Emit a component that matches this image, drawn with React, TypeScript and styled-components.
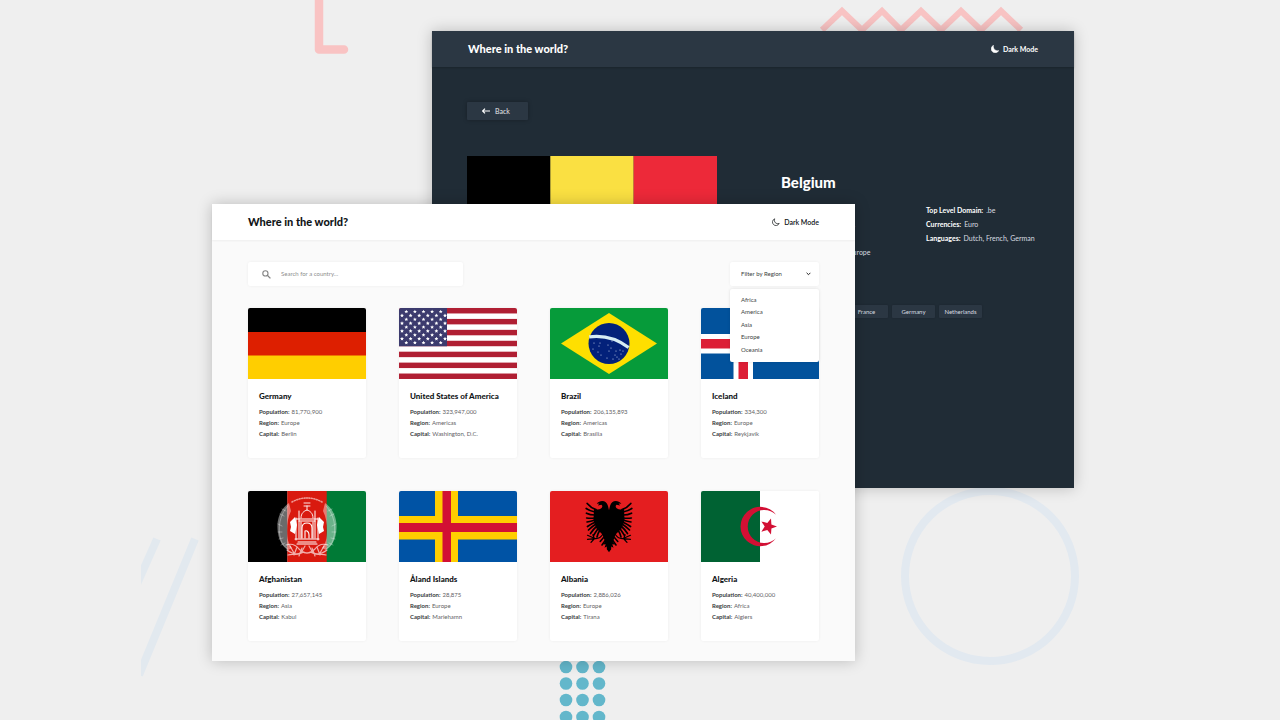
import React from "react";
import styled, { createGlobalStyle, css } from "styled-components";

const GlobalStyle = createGlobalStyle`
  *, *::before, *::after { box-sizing: border-box; }
  body {
    margin: 0;
    background: #efefef;
    font-family: Lato, "Open Sans", sans-serif;
  }
  h1, h2, h3, ul, dl, dd, p { margin: 0; padding: 0; }
  ul { list-style: none; }
  button, input, select { font-family: inherit; border: 0; margin: 0; }
`;

const Stage = styled.div`
  position: relative;
  min-height: 100vh;
  overflow: hidden;
`;

const Ornament = styled.svg`
  position: absolute;
  overflow: visible;
  fill: none;
`;
const Corner = styled(Ornament)` top: 0; left: 314px; `;
const Zigzag = styled(Ornament)` top: 0; right: 252px; `;
const Slashes = styled(Ornament)` top: 534px; left: 141px; overflow: hidden; `;
const Ring = styled(Ornament)` top: 487px; right: 200px; `;
const Dots = styled(Ornament)` top: 658px; left: 559px; `;

const Window = styled.section<{ $dark?: boolean }>`
  position: absolute;
  box-shadow: 0 0 14px rgba(0, 0, 0, 0.22);
  ${({ $dark }) =>
    $dark
      ? css`
          top: 31px;
          left: 432px;
          right: 206px;
          min-height: 457px;
          background: #202c36;
          color: #fff;
        `
      : css`
          top: 204px;
          left: 212px;
          right: 425px;
          background: #fafafa;
          color: #111517;
        `}
`;

const TopBar = styled.header<{ $dark?: boolean }>`
  display: flex;
  align-items: center;
  justify-content: space-between;
  height: 36px;
  padding: 0 36px 1px;
  background: ${({ $dark }) => ($dark ? "#2b3743" : "#fff")};
  box-shadow: 0 1px 2px rgba(0, 0, 0, ${({ $dark }) => ($dark ? 0.2 : 0.05)});
`;

const Brand = styled.h1`
  font-size: 11px;
  line-height: 16px;
  font-weight: 900;
`;

const ModeButton = styled.button<{ $bold?: boolean }>`
  display: flex;
  align-items: center;
  gap: 4px;
  padding: 0;
  background: none;
  color: inherit;
  font-size: 7px;
  line-height: 10px;
  font-weight: ${({ $bold }) => ($bold ? 700 : 600)};
`;

const DarkMain = styled.main`
  padding: 35px;
`;

const BackButton = styled.button`
  display: flex;
  align-items: center;
  justify-content: center;
  gap: 5px;
  width: 61px;
  height: 18px;
  padding: 0 3px 0 0;
  border-radius: 1px;
  background: #2b3743;
  color: #e3e6e9;
  font-size: 7px;
  box-shadow: 0 0 4px rgba(0, 0, 0, 0.3);
`;

const Detail = styled.div`
  display: grid;
  grid-template-columns: 250px 1fr;
  gap: 64px;
  margin-top: 36px;
`;

const BigFlag = styled.svg`
  display: block;
  width: 100%;
  height: 166px;
`;

const DetailInfo = styled.div`
  padding-top: 16px;
`;

const DetailTitle = styled.h2`
  font-size: 15px;
  line-height: 20px;
  font-weight: 900;
`;

const FactColumns = styled.div`
  display: grid;
  grid-template-columns: 145px 1fr;
  margin-top: 11px;
`;

const FactList = styled.dl<{ $large?: boolean }>`
  font-size: ${({ $large }) => ($large ? 7 : 6)}px;
  line-height: ${({ $large }) => ($large ? 14 : 11)}px;
  color: ${({ $large }) => ($large ? "#d9dde1" : "#5f6265")};
  white-space: nowrap;
`;

const Fact = styled.div<{ $large?: boolean }>`
  display: flex;
  gap: ${({ $large }) => ($large ? 3 : 2)}px;
`;

const FactName = styled.dt<{ $large?: boolean }>`
  font-weight: 700;
  color: ${({ $large }) => ($large ? "#fff" : "#3a3d40")};
`;

const Borders = styled.div`
  display: flex;
  align-items: center;
  gap: 4px;
  margin-top: 32px;
  font-size: 7px;
  line-height: 13px;
`;

const BordersTitle = styled.h3`
  width: 60px;
  font-size: inherit;
  white-space: nowrap;
`;

const Chip = styled.a`
  width: 43px;
  border-radius: 1px;
  background: #2b3743;
  color: #d9dde1;
  font-size: 6px;
  text-align: center;
  text-decoration: none;
  box-shadow: 0 0 2px rgba(0, 0, 0, 0.2);
`;

const LightMain = styled.main`
  padding: 22px 36px 20px;
`;

const Controls = styled.div`
  display: flex;
  justify-content: space-between;
  margin-bottom: 22px;
`;

const SearchBox = styled.label`
  display: flex;
  align-items: center;
  gap: 10px;
  width: 215px;
  height: 24px;
  padding: 0 14px;
  border-radius: 2px;
  background: #fff;
  box-shadow: 0 0 3px rgba(0, 0, 0, 0.06);
`;

const SearchInput = styled.input`
  flex: 1;
  min-width: 0;
  padding: 0;
  background: none;
  outline: none;
  font-size: 6px;
  line-height: 12px;
  color: #111517;
  &::placeholder { color: #8e8e8e; opacity: 1; }
`;

const Filter = styled.div`
  position: relative;
  width: 89px;
  height: 24px;
  border-radius: 2px;
  background: #fff;
  box-shadow: 0 0 3px rgba(0, 0, 0, 0.06);
`;

const FilterSelect = styled.select`
  appearance: none;
  display: block;
  width: 100%;
  height: 24px;
  padding: 0 11px 2px;
  background: none;
  outline: none;
  font-size: 6px;
  color: #3c3f42;
`;

const FilterArrow = styled.svg`
  position: absolute;
  top: 10px;
  right: 8px;
  pointer-events: none;
`;

const FilterMenu = styled.ul`
  position: absolute;
  top: 27px;
  left: 0;
  width: 100%;
  padding: 4px 0 6px;
  border-radius: 2px;
  background: #fff;
  box-shadow: 0 0 3px rgba(0, 0, 0, 0.12);
`;

const MenuItem = styled.button`
  display: block;
  width: 100%;
  height: 13px;
  padding: 0 11px;
  background: none;
  color: #3c3f42;
  font-size: 6px;
  line-height: 13px;
  text-align: left;
  li:nth-child(even) > & { height: 12px; line-height: 12px; }
`;

const CardGrid = styled.div`
  display: grid;
  grid-template-columns: repeat(4, 1fr);
  gap: 33px;
`;

const Card = styled.article`
  overflow: hidden;
  border-radius: 2px;
  background: #fff;
  box-shadow: 0 0 3px rgba(0, 0, 0, 0.06);
`;

const CardFlag = styled.svg`
  display: block;
  width: 100%;
  height: 71px;
`;

const CardBody = styled.div`
  padding: 11px 11px 19px;
`;

const CardTitle = styled.h2`
  margin-bottom: 4px;
  font-size: 8px;
  line-height: 12px;
  font-weight: 900;
  white-space: nowrap;
`;

const GermanyFlag = () => (
  <>
    <path fill="#000" d="M0 0h118v24H0z" />
    <path fill="#dd1f00" d="M0 24h118v24H0z" />
    <path fill="#ffce00" d="M0 47.400h118V71H0z" />
  </>
);

const UsaFlag = () => (
  <>
    <path fill="#fff" d="M0 0h118v71H0z" />
    {[0, 1, 2, 3, 4, 5, 6].map((i) => (
      <rect key={i} y={i * 10.92} width="118" height="5.46" fill="#b01f33" />
    ))}
    <path fill="#3c3b6e" d="M0 0h48v38.200H0z" />
    {Array.from({ length: 9 }, (_, r) =>
      Array.from({ length: r % 2 ? 6 : 5 }, (_, c) => (
        <path
          key={`${r}-${c}`}
          transform={`translate(${(r % 2 ? 3 : 7.300) + c * 8.600} ${3.600 + r * 3.880})`}
          fill="#fff"
          d="M0-1.900L.6-.7 1.900-.6.9.400 1.200 1.700 0 1-1.200 1.700-.9.400-1.900-.6-.6-.7z"
        />
      ))
    )}
  </>
);

const BrazilFlag = () => (
  <>
    <path fill="#069b3a" d="M0 0h118v71H0z" />
    <path fill="#fedf00" d="M11 35.500L59 5l48 30.500L59 66z" />
    <circle cx="59" cy="35.500" r="20.500" fill="#03217a" />
    <path d="M39.200 28.800Q61 26 78.600 39.500" fill="none" stroke="#d6ecf4" strokeWidth="3.200" />
    <g fill="#c8d2ea">
      {[[44, 35], [49, 38], [43, 41], [48, 44], [51, 47], [50, 35], [58, 37], [61, 40], [59, 43], [66, 43], [70, 42], [71, 46], [67, 49], [69, 51], [73, 43], [65, 47], [57, 50], [62, 33], [63, 51]].map(
        ([x, y]) => <circle key={`${x}-${y}`} cx={x} cy={y} r=".6" />
      )}
    </g>
  </>
);

const IcelandFlag = () => (
  <>
    <path fill="#02529c" d="M0 0h118v71H0z" />
    <path fill="#fff" d="M32.500 0h19.500v26H118v19.500H52V71H32.500V45.500H0V26h32.500z" />
    <path fill="#dc1e35" d="M37.500 0h9.500v31H118v9.500H47V71h-9.500V40.500H0V31h37.500z" />
  </>
);

const AfghanFlag = () => (
  <>
    <path fill="#000" d="M0 0h39.500v71H0z" />
    <path fill="#d91a0f" d="M39.300 0H79v71H39.300z" />
    <path fill="#007a36" d="M78.700 0H118v71H78.700z" />
    <g fill="none" stroke="#fff" strokeLinecap="round">
      {[1, -1].map((s) => (
        <g key={s} transform={s === 1 ? undefined : "translate(118 0) scale(-1 1)"}>
          <path d="M41 12C31 19 28 31 30 42c1 8 5 14 10 17l4-2c-4-5-5-10-5-17 0-8 1-14 4-20z" fill="#fff" fillOpacity=".42" stroke="none" />
          <path d="M40 15c-8 8-11 22-7 34 1 4 4 7 7 9M38 20l-4-2M36 25l-4-2M34 35l-4-2M34 41l-4 0M35 47l-4 1M37 52l-4 2" strokeWidth=".7" strokeOpacity=".45" />
          <path d="M38 54c6-2 10 0 13 4 3 3 5 4 8 4M39 59c5 4 11 5 17 2M40 64c5-2 9 1 12-2M42 55l4 7M49 56l-3 8M54 57l-3 8M57 55l-4 7" strokeWidth="1.200" strokeOpacity=".65" />
          <path d="M42 31l5-5 2 8-2 9-5-3 1-4z" fill="#fff" stroke="none" />
          <path d="M48 27v22M51 20v27M53 31v16" strokeWidth="1" />
          <path d="M44 11q7-4 15-4" strokeWidth="1.600" strokeOpacity=".55" strokeDasharray="1 1.600" />
        </g>
      ))}
      <path d="M48 28h22M47 48h24M50 51h18M49 53h20" strokeWidth="1.100" />
      <path d="M53 27c0-5 3-7 6-8 3 1 6 3 6 8M59 19v-4M56 12h6M56 15h6" strokeWidth=".9" />
      <path d="M54 47V37c0-3 2-5 5-5s5 2 5 5v10M57 47v-7c2-1 4 1 4 4v3M51 30h16" strokeWidth="1.100" />
    </g>
  </>
);

const AlandFlag = () => (
  <>
    <path fill="#0053a5" d="M0 0h118v71H0z" />
    <path fill="#ffce00" d="M36 0h23v25h59v23.500H59V71H36V48.500H0V25h36z" />
    <path fill="#d21034" d="M43.500 0H52v32h66v9H52v30h-8.500V41H0v-9h43.500z" />
  </>
);

/* Right half of the eagle: head, wing feathers, claw, tail. Mirrored about x = 59. */
const EagleHalf = () => (
  <>
    <path d="M58.800 20L60 15c1-3 3-4.900 5.800-4.900 2.200 0 4 1 5.500 2.700l-2.700-.3 1.600 2.100-3.700-.8c-1.300 1.200-1 2.700.5 3.700 2 1.200 4.500 1.300 7 .1l.5 12-3 8-6 6-2.500 7 1.600 3-2.300-.4 1.200 3.600-2.200-1.400-.2 3-2.300 2.800z" />
    <g fill="none" stroke="#000" strokeWidth="1.700" strokeLinecap="round">
      <path d="M72 18.500q5-1.500 8.800-6M73 21q5-1 8.800-3.500M73 24q5 0 8.500-1.800M73 27q5 .5 8.300 0M73 29q4.500 1.500 8 2M72.500 31q4.500 2 8 4.500M72 33q4 2.500 7.500 6M71 35q3.500 3 6.500 7.500M69.500 37q2.500 3.500 5 7.500M68 39q2 3 3 7" />
    </g>
    <g fill="none" stroke="#000" strokeLinecap="round">
      <path d="M65 43q3 5 8 4.500M73 47.500l7.500-3.200M73 47.500l7.500 .8M73.500 47.500l3.500 3.800M74 47l1-3.500" strokeWidth="1.200" />
      <path d="M64 46l3.800 4.500M62.500 49l3.500 5" strokeWidth="1.600" />
    </g>
  </>
);

const AlbaniaFlag = () => (
  <>
    <path fill="#e41e20" d="M0 0h118v71H0z" />
    <EagleHalf />
    <g transform="translate(118 0) scale(-1 1)">
      <EagleHalf />
    </g>
  </>
);

const AlgeriaFlag = () => (
  <>
    <path fill="#fff" d="M59 0h59v71H59z" />
    <path fill="#006233" d="M0 0h59v71H0z" />
    <path fill="#d21034" d="M75 23.700A19.700 19.700 0 1 0 75 47.300A16.600 16.600 0 1 1 75 23.700z" />
    <path fill="#d21034" d="M76 35.500l-5.600 2L70 43.600l-3.700-4.700-5.900 1.800 3.300-5.200-3.300-5.100 5.900 1.700 3.700-4.700.4 6.200z" />
  </>
);

const countries = [
  { name: "Germany", population: "81,770,900", region: "Europe", capital: "Berlin", Flag: GermanyFlag },
  { name: "United States of America", population: "323,947,000", region: "Americas", capital: "Washington, D.C.", Flag: UsaFlag },
  { name: "Brazil", population: "206,135,893", region: "Americas", capital: "Brasília", Flag: BrazilFlag },
  { name: "Iceland", population: "334,300", region: "Europe", capital: "Reykjavík", Flag: IcelandFlag },
  { name: "Afghanistan", population: "27,657,145", region: "Asia", capital: "Kabul", Flag: AfghanFlag },
  { name: "Åland Islands", population: "28,875", region: "Europe", capital: "Mariehamn", Flag: AlandFlag },
  { name: "Albania", population: "2,886,026", region: "Europe", capital: "Tirana", Flag: AlbaniaFlag },
  { name: "Algeria", population: "40,400,000", region: "Africa", capital: "Algiers", Flag: AlgeriaFlag },
];

const regions = ["Africa", "America", "Asia", "Europe", "Oceania"];

function Facts({ items, large }: { items: [string, string][]; large?: boolean }) {
  return (
    <FactList $large={large}>
      {items.map(([name, value]) => (
        <Fact key={name} $large={large}>
          <FactName $large={large}>{name}:</FactName>
          <dd>{value}</dd>
        </Fact>
      ))}
    </FactList>
  );
}

function Decorations() {
  return (
    <>
      <Corner width="34" height="54" aria-hidden="true">
        <path d="M5 -8V49.500H30" stroke="#f9c3c3" strokeWidth="8.500" strokeLinecap="round" strokeLinejoin="round" />
      </Corner>
      <Zigzag width="206" height="36" aria-hidden="true">
        <path d="M0 30L20 11l20 19L60 11l19 19L99 11l20 19 20-19 20 19 20-19 20 19" stroke="#f8c3c3" strokeWidth="6" />
      </Zigzag>
      <Slashes width="60" height="150" aria-hidden="true">
        <path d="M16 5L-4 50M54 5L-2 141" stroke="#e2e9ef" strokeWidth="8" />
      </Slashes>
      <Ring width="180" height="180" aria-hidden="true">
        <circle cx="90" cy="89" r="85" stroke="#e2e9f0" strokeWidth="8" />
      </Ring>
      <Dots width="48" height="66" aria-hidden="true">
        {[9, 25.5, 42, 59].map((y) =>
          [7, 23.5, 40].map((x) => <circle key={`${x}-${y}`} cx={x} cy={y} r="6.300" fill="#63b7cb" />)
        )}
      </Dots>
    </>
  );
}

function DetailWindow() {
  return (
    <Window $dark aria-label="Country detail">
      <TopBar $dark>
        <Brand>Where in the world?</Brand>
        <ModeButton $bold type="button">
          <svg width="8" height="8" viewBox="0 0 8 8" aria-hidden="true">
            <path d="M2.500.2a4 4 0 1 0 5.300 5.400C5 6.400 1.600 4 2.500.2z" fill="#fff" stroke="#fff" strokeWidth=".5" strokeLinejoin="round" />
          </svg>
          Dark Mode
        </ModeButton>
      </TopBar>
      <DarkMain>
        <BackButton type="button">
          <svg width="8" height="6" viewBox="0 0 8 6" fill="none" stroke="#fff" aria-hidden="true">
            <path d="M8 3H.7M3 .6L.6 3 3 5.400" strokeWidth="1.200" />
          </svg>
          Back
        </BackButton>
        <Detail>
          <BigFlag viewBox="0 0 3 2" preserveAspectRatio="none" role="img" aria-label="Flag of Belgium">
            <path fill="#000" d="M0 0h1v2H0z" />
            <path fill="#fae042" d="M1 0h1v2H1z" />
            <path fill="#ed2939" d="M2 0h1v2H2z" />
          </BigFlag>
          <DetailInfo>
            <DetailTitle>Belgium</DetailTitle>
            <FactColumns>
              <Facts
                large
                items={[
                  ["Native Name", "België"],
                  ["Population", "11,319,511"],
                  ["Region", "Europe"],
                  ["Sub Region", "Western Europe"],
                  ["Capital", "Brussels"],
                ]}
              />
              <Facts
                large
                items={[
                  ["Top Level Domain", ".be"],
                  ["Currencies", "Euro"],
                  ["Languages", "Dutch, French, German"],
                ]}
              />
            </FactColumns>
            <Borders>
              <BordersTitle>Border Countries:</BordersTitle>
              <Chip href="#france">France</Chip>
              <Chip href="#germany">Germany</Chip>
              <Chip href="#netherlands">Netherlands</Chip>
            </Borders>
          </DetailInfo>
        </Detail>
      </DarkMain>
    </Window>
  );
}

function ListWindow() {
  return (
    <Window aria-label="Country list">
      <TopBar>
        <Brand>Where in the world?</Brand>
        <ModeButton type="button">
          <svg width="8" height="8" viewBox="0 0 8 8" aria-hidden="true">
            <path d="M2.700.8a3.500 3.500 0 1 0 4.500 4.600A3.400 3.400 0 0 1 2.700.8z" fill="none" stroke="#111517" strokeWidth=".7" />
          </svg>
          Dark Mode
        </ModeButton>
      </TopBar>
      <LightMain>
        <Controls>
          <SearchBox>
            <svg width="9" height="9" viewBox="0 0 9 9" fill="none" stroke="#848484" aria-label="Search">
              <circle cx="3.400" cy="3.400" r="2.600" strokeWidth="1.100" />
              <path d="M5.300 5.300L8.400 8.400" strokeWidth="1.300" />
            </svg>
            <SearchInput type="search" placeholder="Search for a country..." />
          </SearchBox>
          <Filter>
            <FilterSelect aria-label="Filter by Region" defaultValue="">
              <option value="">Filter by Region</option>
              {regions.map((r) => (
                <option key={r}>{r}</option>
              ))}
            </FilterSelect>
            <FilterArrow width="5" height="4" viewBox="0 0 5 4" aria-hidden="true">
              <path d="M.6 .8L2.500 2.700 4.400 .8" fill="none" stroke="#222" strokeWidth="1" />
            </FilterArrow>
            <FilterMenu>
              {regions.map((r) => (
                <li key={r}>
                  <MenuItem type="button">{r}</MenuItem>
                </li>
              ))}
            </FilterMenu>
          </Filter>
        </Controls>
        <CardGrid>
          {countries.map(({ name, population, region, capital, Flag }) => (
            <Card key={name}>
              <CardFlag viewBox="0 0 118 71" preserveAspectRatio="none" role="img" aria-label={`Flag of ${name}`}>
                <Flag />
              </CardFlag>
              <CardBody>
                <CardTitle>{name}</CardTitle>
                <Facts
                  items={[
                    ["Population", population],
                    ["Region", region],
                    ["Capital", capital],
                  ]}
                />
              </CardBody>
            </Card>
          ))}
        </CardGrid>
      </LightMain>
    </Window>
  );
}

export default function App() {
  return (
    <>
      <GlobalStyle />
      <Stage>
        <Decorations />
        <DetailWindow />
        <ListWindow />
      </Stage>
    </>
  );
}
